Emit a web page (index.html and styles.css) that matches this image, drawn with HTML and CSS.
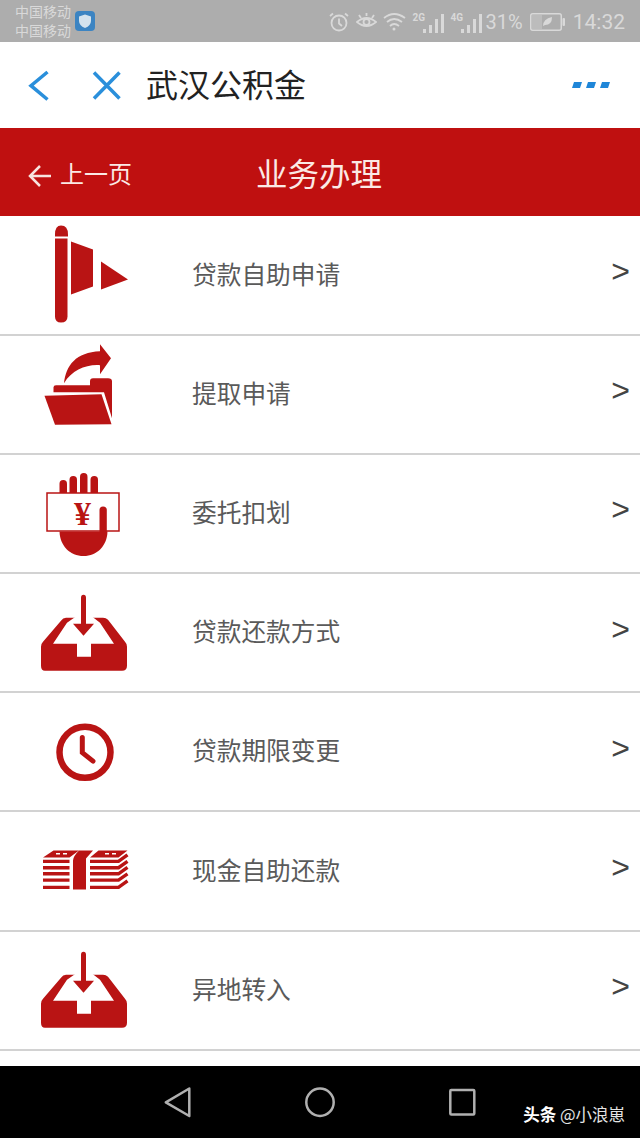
FILE: index.html
```html
<!DOCTYPE html>
<html lang="zh-CN">
<head>
    <meta charset="UTF-8">
    <meta name="viewport" content="width=device-width, initial-scale=1.0">
    <title>武汉公积金</title>
    <link rel="stylesheet" href="styles.css">
</head>
<body>
    <svg class="defs" width="0" height="0">
        <symbol id="tray" viewBox="30 577.2 110 110">
            <path class="red" d="M66 617H103Q106 617 108 619L125 641Q127 643 127 646V665Q127 670 122 670H45Q41 670 41 665V646Q41 643 43 641L61 620Q63 617 66 617Z"/>
            <path class="white" d="M77 615L67 622L53 643H77V656H91V643H114L100 622L91 615Z"/>
            <path class="red" d="M81 597Q81 594 83.500 594Q86 594 86 597V623H94L83.500 635L73 623H81Z"/>
        </symbol>
    </svg>

    <div class="status-bar">
        <div class="carrier">
            <span>中国移动</span>
            <span>中国移动</span>
        </div>
        <svg class="shield" width="20" height="20" viewBox="0 0 20 20">
            <rect width="20" height="20" rx="4" fill="#3c84c2"/>
            <path d="M10 3.500L16 5.500V10Q16 14.500 10 17Q4 14.500 4 10V5.500Z" fill="#d5e3ee"/>
        </svg>
        <div class="status-right">
            <svg width="20" height="20" viewBox="0 0 20 20" fill="none" stroke="#d9d9d9" stroke-width="1.800">
                <circle cx="10" cy="11" r="7.500"/>
                <path d="M10 6.500V11.500L13 14M1 4L4 1.500M19 4L16 1.500"/>
            </svg>
            <svg class="eye" width="21" height="20" viewBox="0 0 21 20" fill="none" stroke="#d9d9d9" stroke-width="1.800">
                <path d="M1 10Q10.500 2 20 10Q10.500 18 1 10Z"/>
                <circle cx="10.500" cy="10" r="3"/>
                <path d="M3 3L5 6M10.500 1V4M18 3L16 6"/>
            </svg>
            <svg class="wifi" width="23" height="20" viewBox="0 0 23 20" fill="none" stroke="#d9d9d9" stroke-width="1.800">
                <path d="M1 6Q11 -2 22 6M4 10Q11 4 19 10M7 14Q11 10 16 14"/>
                <circle cx="11" cy="17" r="1.500" fill="#d9d9d9" stroke="none"/>
            </svg>
            <div class="signal">
                <span class="net">2G</span>
                <svg width="21" height="20" viewBox="0 0 21 20" fill="#d9d9d9">
                    <rect x="0" y="16" width="3" height="4"/>
                    <rect x="6" y="12" width="3" height="8"/>
                    <rect x="12" y="6" width="3" height="14"/>
                    <rect x="18" y="1" width="3" height="19"/>
                </svg>
            </div>
            <div class="signal signal-4g">
                <span class="net">4G</span>
                <svg width="21" height="20" viewBox="0 0 21 20" fill="#d9d9d9">
                    <rect x="0" y="16" width="3" height="4"/>
                    <rect x="6" y="12" width="3" height="8"/>
                    <rect x="12" y="6" width="3" height="14"/>
                    <rect x="18" y="1" width="3" height="19"/>
                </svg>
            </div>
            <span class="percent">31%</span>
            <svg class="battery" width="35" height="18" viewBox="0 0 35 18">
                <rect x="0.750" y="0.750" width="30.500" height="16.500" rx="2" fill="none" stroke="#d9d9d9" stroke-width="1.500"/>
                <rect x="2" y="2" width="10" height="14" fill="#bcbcbc"/>
                <path d="M13 13Q13 6 22 4Q22 12 15 12Z" fill="#d9d9d9"/>
                <rect x="32.500" y="5" width="2.500" height="8" rx="1" fill="#d9d9d9"/>
            </svg>
            <span class="clock">14:32</span>
        </div>
    </div>

    <div class="nav-bar">
        <svg class="nav-icons" width="100" height="40" viewBox="26 65 100 40" fill="none" stroke="#2a8fdb" stroke-width="3.500">
            <path d="M47.500 72L31 85.700L47.500 99.500"/>
            <path d="M94 72.500L119.500 98.500M119.500 72.500L94 98.500"/>
        </svg>
        <span class="nav-title">武汉公积金</span>
        <svg class="more" width="38" height="8" viewBox="0 0 38 8" fill="#1f86d8">
            <path d="M2 1H10L8 7H0ZM16 1H24L22 7H14ZM30 1H38L36 7H28Z"/>
        </svg>
    </div>

    <div class="page-header">
        <div class="back">
            <svg class="back-arrow" width="24" height="22" viewBox="0 0 24 22" fill="none" stroke="#f8e4df" stroke-width="2.500">
                <path d="M24 11H3M13 1L3 11L13 21"/>
            </svg>
            <span>上一页</span>
        </div>
        <h1>业务办理</h1>
    </div>

    <div class="list">
        <div class="row">
            <svg class="icon" viewBox="30 219.600 110 110">
                <path class="red" d="M55 234Q55 225 61 225Q68 225 68 234V236H55Z"/>
                <path class="red" d="M55 238H67.500V316Q67.500 322 61 322Q55 322 55 316Z"/>
                <path class="red" d="M71 241L93 249V286L71 294Z"/>
                <path class="red" d="M101 261L128 279L101 289Z"/>
            </svg>
            <span class="label">贷款自助申请</span>
            <span class="chevron">&gt;</span>
        </div>
        <div class="row">
            <svg class="icon" viewBox="30 338.800 110 110">
                <path class="red" d="M64 383C66 365 76 352 100 351V344L111 358L100 374V365C86 364 72 370 64 383Z"/>
                <path class="red" d="M53.500 392V387Q53.500 385 56 385H90V381Q90 378 93 378H108Q112 378 112 381V418L104 392Z"/>
                <path class="red" d="M44.500 395.500L101.500 394L111.500 424L55 424.500Z"/>
            </svg>
            <span class="label">提取申请</span>
            <span class="chevron">&gt;</span>
        </div>
        <div class="row">
            <svg class="icon" viewBox="30 458 110 110">
                <rect class="red" x="59.500" y="480" width="7.500" height="16" rx="3.700"/>
                <rect class="red" x="69.500" y="476" width="7.500" height="20" rx="3.700"/>
                <rect class="red" x="80" y="473" width="7.500" height="23" rx="3.700"/>
                <rect class="red" x="90.500" y="476" width="7.500" height="20" rx="3.700"/>
                <rect x="47" y="493" width="72" height="38" fill="#fff" stroke="#b91414" stroke-width="1.500"/>
                <path class="red" d="M59.500 531.500H107.500C107 546 97 556 83.500 556C70 556 60 546 59.500 531.500Z"/>
                <path class="red" d="M99.500 510Q99.500 506.500 103 506.500Q106.800 506.500 106.800 510V532H99.500Z"/>
                <text class="yen" x="82.500" y="525">¥</text>
            </svg>
            <span class="label">委托扣划</span>
            <span class="chevron">&gt;</span>
        </div>
        <div class="row">
            <svg class="icon"><use href="#tray"/></svg>
            <span class="label">贷款还款方式</span>
            <span class="chevron">&gt;</span>
        </div>
        <div class="row">
            <svg class="icon" viewBox="30 696.400 110 110">
                <circle cx="85" cy="751.700" r="25.500" fill="none" stroke="#b91414" stroke-width="6.500"/>
                <path d="M82.300 737V752L93 760.500" fill="none" stroke="#b91414" stroke-width="5" stroke-linecap="round"/>
            </svg>
            <span class="label">贷款期限变更</span>
            <span class="chevron">&gt;</span>
        </div>
        <div class="row">
            <svg class="icon" viewBox="30 815.600 110 110">
                <path class="red" d="M53.500 850H79L69.500 857H43Z"/>
                <path class="red" d="M98.500 850H127.500L118.500 857H90Z"/>
                <path class="red" d="M79 850H93L86 858V889H73V860Q73 856 79 850Z"/>
                <path class="white" d="M56 852.500H60V854H56ZM63 852.500H67V854H63ZM105 852.500H109V854H105ZM112 852.500H116V854H112Z"/>
                <path d="M43 861H69.500M43 867.300H69.500M43 873.400H69.500M43 879.700H69.500M43 887H69.500" fill="none" stroke="#b91414" stroke-width="3.400"/>
                <path d="M90 861H118.500L127.500 854.500M90 867.300H118.500L127.500 861M90 873.400H118.500L127.500 867M90 879.700H118.500L127.500 873.500M90 887H118.500L127.500 880.500" fill="none" stroke="#b91414" stroke-width="3.400"/>
            </svg>
            <span class="label">现金自助还款</span>
            <span class="chevron">&gt;</span>
        </div>
        <div class="row">
            <svg class="icon"><use href="#tray"/></svg>
            <span class="label">异地转入</span>
            <span class="chevron">&gt;</span>
        </div>
    </div>

    <div class="system-bar">
        <svg class="system-keys" width="312" height="32" viewBox="164 1086 312 32" fill="none" stroke="#b0b0b0" stroke-width="2.500" stroke-linejoin="round">
            <path d="M189.300 1088.500L165.800 1102.300L189.300 1116Z"/>
            <circle cx="320" cy="1102.300" r="13.700"/>
            <rect x="450.300" y="1090" width="24" height="24.500" rx="1"/>
        </svg>
        <div class="watermark"><b>头条</b> @小浪崽</div>
    </div>
</body>
</html>
```

FILE: styles.css
```css
* {
    box-sizing: border-box;
}
body {
    margin: 0;
    width: 640px;
    height: 1138px;
    overflow: hidden;
    display: flex;
    flex-direction: column;
    background-color: white;
    font-family: "Noto Sans CJK SC", "Noto Sans", sans-serif;
}
.defs {
    position: absolute;
}
.red {
    fill: #b91414;
}
.white {
    fill: white;
}

/* status bar */
.status-bar {
    height: 42px;
    flex: none;
    display: flex;
    align-items: center;
    padding: 0 15px;
    background-color: #adadad;
    color: #d9d9d9;
}
.carrier {
    display: flex;
    flex-direction: column;
    font-size: 14px;
    line-height: 19px;
    margin-top: -1px;
}
.shield {
    margin-left: 4px;
}
.status-right {
    margin-left: auto;
    padding-top: 2px;
    display: flex;
    align-items: center;
}
.eye {
    margin-left: 7px;
}
.wifi {
    margin-left: 6px;
}
.signal {
    display: flex;
    align-items: flex-end;
    margin-left: 7px;
    width: 31px;
    height: 22px;
}
.signal-4g {
    margin-left: 7px;
}
.net {
    width: 10px;
    height: 20px;
    font-family: Roboto, sans-serif;
    font-size: 10px;
    font-weight: bold;
    line-height: 10px;
}
.percent {
    margin-left: 4px;
    font-family: Roboto, sans-serif;
    font-size: 20px;
    line-height: 22px;
}
.battery {
    margin-left: 7px;
}
.clock {
    margin-left: 8px;
    font-family: Roboto, sans-serif;
    font-size: 21px;
    line-height: 24px;
}

/* nav bar */
.nav-bar {
    height: 86px;
    flex: none;
    display: flex;
    align-items: center;
    padding: 0 26px;
}
.nav-title {
    margin-left: 20px;
    margin-bottom: 4px;
    font-size: 32px;
    color: #222;
}
.more {
    margin-left: auto;
    margin-right: 4px;
}

/* page header */
.page-header {
    position: relative;
    height: 88px;
    flex: none;
    display: flex;
    align-items: center;
    justify-content: center;
    background-color: #bf1010;
    color: #fbe9e5;
}
.back {
    position: absolute;
    left: 27px;
    top: 28px;
    display: flex;
    align-items: center;
    gap: 9px;
    font-size: 24px;
    line-height: 34px;
}
.back-arrow {
    margin-top: 6px;
}
.page-header h1 {
    margin: 0 2px 0 0;
    font-size: 31.500px;
    font-weight: normal;
}

/* list */
.list {
    flex: 1;
    overflow: hidden;
    padding-top: 0.500px;
}
.row {
    height: 119.200px;
    display: flex;
    align-items: center;
    padding: 0 10px 0 30px;
    border-bottom: 2px solid #d2d2d2;
}
.icon {
    width: 110px;
    height: 110px;
    flex: none;
}
.yen {
    font-family: "Liberation Serif", serif;
    font-weight: bold;
    font-size: 34px;
    text-anchor: middle;
    fill: #b91414;
}
.label {
    margin-left: 52px;
    margin-bottom: 5px;
    font-size: 24.700px;
    color: #5a5a5a;
}
.chevron {
    margin-left: auto;
    margin-bottom: 8px;
    font-family: "Liberation Sans", sans-serif;
    font-size: 32px;
    line-height: 36px;
    color: #444;
}

/* system bar */
.system-bar {
    position: relative;
    height: 72px;
    flex: none;
    display: flex;
    align-items: center;
    justify-content: center;
    background-color: black;
}
.watermark {
    position: absolute;
    right: 15px;
    bottom: 13px;
    font-size: 16.500px;
    line-height: 22px;
    color: #e4e4e4;
}
.watermark b {
    color: white;
}
```
